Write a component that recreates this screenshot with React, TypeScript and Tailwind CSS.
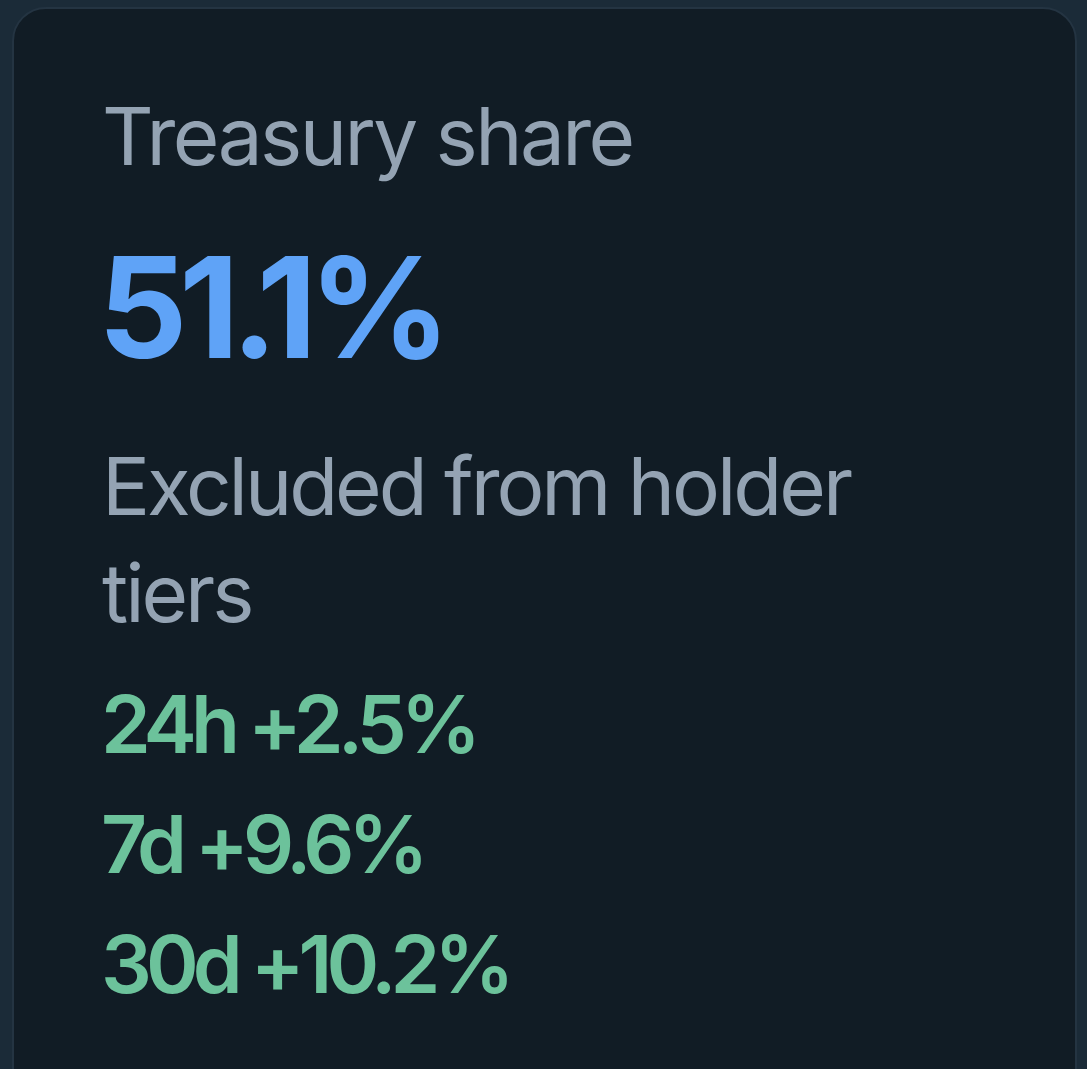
const stats = [
  { label: "24h", value: "+2.5%" },
  { label: "7d", value: "+9.6%" },
  { label: "30d", value: "+10.2%" },
];

export default function App() {
  return (
    <div className="h-[1069px] overflow-hidden bg-[#1b2b38] pl-[12px] pr-[10px] pt-[7px] font-['Inter',sans-serif]">
      <div className="h-[1200px] rounded-[34px] border-2 border-[#243442] bg-[#111c25] pl-[88px] pt-[87px]">
        <p className="text-[80px] leading-[80px] tracking-[-0.032em] text-[#94a3b3]">
          Treasury share
        </p>
        <p className="mt-[61px] -ml-[4px] text-[140px] leading-[140px] font-bold tracking-[-0.06em] text-[#5fa3f7]">
          51.1%
        </p>
        <p className="mt-[55px] max-w-[800px] text-[80px] leading-[107px] tracking-[-0.038em] text-[#94a3b3]">
          Excluded from holder tiers
        </p>
        <div className="mt-[18px]">
          {stats.map((s) => (
            <p
              key={s.label}
              className="-ml-[1px] text-[80px] leading-[120px] font-semibold tracking-[-0.075em] text-[#6cc29b]"
            >
              {s.label} {s.value}
            </p>
          ))}
        </div>
      </div>
    </div>
  );
}
